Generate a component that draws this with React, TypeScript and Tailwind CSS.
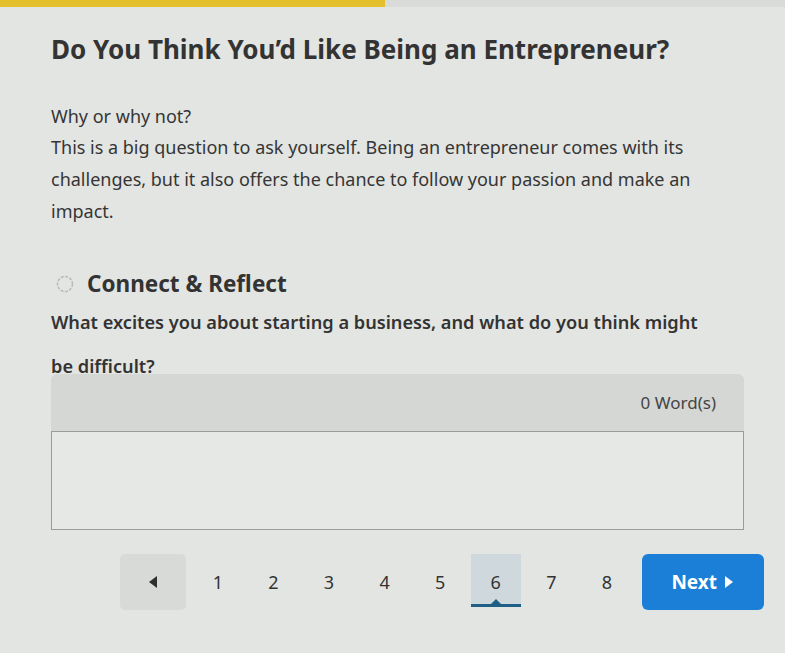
import { useState } from "react";

const pages = [1, 2, 3, 4, 5, 6, 7, 8];

function ReflectIcon() {
  return (
    <svg width="20" height="20" viewBox="0 0 20 20" className="shrink-0">
      <circle
        cx="10"
        cy="10"
        r="7.5"
        fill="none"
        stroke="#b9bcb9"
        strokeWidth="1.6"
        strokeDasharray="3 1.4"
      />
    </svg>
  );
}

export default function App() {
  const [text, setText] = useState("");
  const words = text.trim() ? text.trim().split(/\s+/).length : 0;

  return (
    <div
      className="h-[653px] w-[785px] overflow-hidden bg-[#e3e5e2] text-[#353535]"
      style={{ fontFamily: "'Noto Sans', 'Open Sans', sans-serif" }}
    >
      <div className="h-[7px] w-full bg-[#d9dbd8]">
        <div className="h-full w-[385px] bg-[#e3c02c]" />
      </div>

      <div className="pl-[51px] pt-[24px]">
        <h1 className="text-[26px] font-bold leading-[36px] text-[#333]">
          Do You Think You’d Like Being an Entrepreneur?
        </h1>

        <p className="mt-[37px] text-[18px] leading-[24px]">Why or why not?</p>

        <p className="mt-[3px] w-[660px] text-[18px] leading-[32px]">
          This is a big question to ask yourself. Being an entrepreneur comes
          with its challenges, but it also offers the chance to follow your
          passion and make an impact.
        </p>

        <div className="mt-[43px] flex items-center gap-[12px] pl-[4px]">
          <ReflectIcon />
          <h2 className="text-[22.5px] font-bold leading-[28px] text-[#333]">
            Connect &amp; Reflect
          </h2>
        </div>

        <p className="mt-[2px] w-[668px] text-[18.2px] font-semibold leading-[44px] text-[#333]">
          What excites you about starting a business, and what do you think
          might be difficult?
        </p>

        <div className="mt-[-14px] w-[693px]">
          <div className="flex h-[57px] items-center justify-end rounded-t-[6px] bg-[#d5d7d4] pr-[28px] text-[17px] text-[#444]">
            {words} Word(s)
          </div>
          <textarea
            value={text}
            onChange={(e) => setText(e.target.value)}
            className="block h-[99px] w-full resize-none border border-[#9a9c99] bg-[#e6e8e5] p-2 text-[16px] outline-none"
          />
        </div>

        <div className="mt-[24px] flex w-max items-center pl-[69px]">
          <button className="flex h-[56px] w-[66px] shrink-0 items-center justify-center rounded-[5px] bg-[#d8dad7]">
            <svg width="10" height="14" viewBox="0 0 10 14">
              <path d="M9 1 L1 7 L9 13 Z" fill="#2f2f2f" />
            </svg>
          </button>
          <div className="ml-[4px] flex items-center">
            {pages.map((p) => (
              <div
                key={p}
                className="relative flex h-[56px] w-[55.6px] shrink-0 items-center justify-center"
              >
                {p === 6 && (
                  <div className="absolute bottom-[3px] left-[3px] right-[3px] top-[0px] bg-[#cfd9dd]">
                    <div className="absolute bottom-0 left-0 right-0 h-[3px] bg-[#1f5f86]" />
                    <div className="absolute bottom-[3px] left-1/2 h-0 w-0 -translate-x-1/2 border-x-[5px] border-b-[5px] border-x-transparent border-b-[#1f5f86]" />
                  </div>
                )}
                <span className="relative text-[18px] leading-[24px] text-[#333]">
                  {p}
                </span>
              </div>
            ))}
          </div>
          <button className="ml-[7px] flex h-[56px] w-[122px] shrink-0 items-center justify-center gap-[7px] rounded-[6px] bg-[#1b7fd8] text-[19px] font-bold text-white">
            Next
            <svg width="10" height="14" viewBox="0 0 10 14">
              <path d="M1 1 L9 7 L1 13 Z" fill="#fff" />
            </svg>
          </button>
        </div>
      </div>
    </div>
  );
}
